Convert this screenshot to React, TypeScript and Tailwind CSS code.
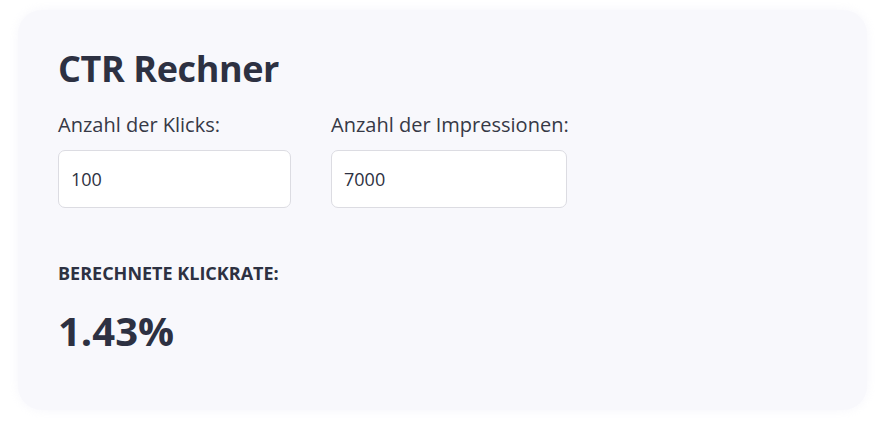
import React, { useState } from 'react';

const App: React.FC = () => {
  const [clicks, setClicks] = useState('100');
  const [impressions, setImpressions] = useState('7000');

  const c = parseFloat(clicks);
  const i = parseFloat(impressions);
  const ctr = i > 0 && !isNaN(c) ? ((c / i) * 100).toFixed(2) + '%' : '0.00%';

  return (
    <div className="min-h-screen bg-white pl-[18px] pr-[16px] pt-[10px] font-['Open_Sans',sans-serif] text-[#2d3142]">
      <div className="h-[400px] rounded-[24px] bg-[#f8f8fc] px-10 pt-[35px] shadow-[0_0_10px_rgba(244,244,250,0.8)]">
        <h1 className="text-[36px] font-bold leading-[48px] tracking-[-0.4px]">CTR Rechner</h1>
        <div className="mt-[18px] flex gap-10">
          <div className="flex flex-col">
            <label className="text-[20px] font-medium leading-[28px] text-[#363946]">Anzahl der Klicks:</label>
            <input
              type="text"
              value={clicks}
              onChange={(e) => setClicks(e.target.value)}
              className="mt-[11px] h-[58px] w-[233px] rounded-[7px] border border-[#dcdce2] bg-white px-3 text-[18px] text-[#2d3142] outline-none"
            />
          </div>
          <div className="flex flex-col">
            <label className="text-[20px] font-medium leading-[28px] text-[#363946]">Anzahl der Impressionen:</label>
            <input
              type="text"
              value={impressions}
              onChange={(e) => setImpressions(e.target.value)}
              className="mt-[11px] h-[58px] w-[236px] rounded-[7px] border border-[#dcdce2] bg-white px-3 text-[18px] text-[#2d3142] outline-none"
            />
          </div>
        </div>
        <div className="mt-[53px] text-[18px] font-bold uppercase leading-[24px]">Berechnete Klickrate:</div>
        <div className="mt-[20px] text-[40px] font-bold leading-[52px]">{ctr}</div>
      </div>
    </div>
  );
};

export default App;
